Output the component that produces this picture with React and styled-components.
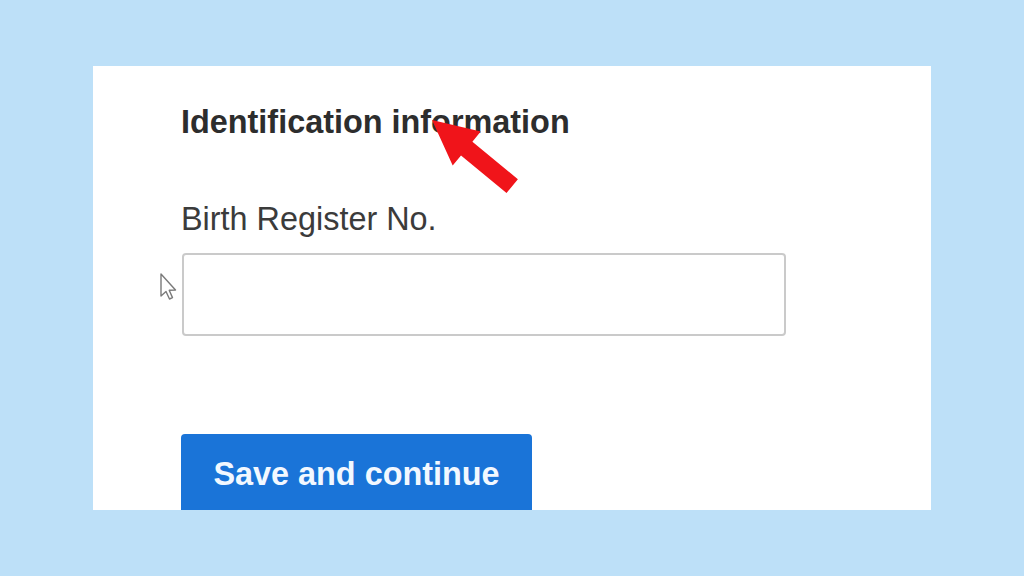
import React from 'react';
import styled, { createGlobalStyle } from 'styled-components';

const GlobalStyle = createGlobalStyle`
  html, body {
    margin: 0;
    padding: 0;
    width: 1024px;
    height: 576px;
    overflow: hidden;
    background: #bde0f8;
    font-family: "Liberation Sans", Arial, sans-serif;
  }
`;

const Page = styled.div`
  width: 1024px;
  height: 576px;
  padding: 66px 0 0 93px;
  box-sizing: border-box;
`;

const Card = styled.section`
  position: relative;
  width: 838px;
  height: 444px;
  background: #ffffff;
  overflow: hidden;
  padding: 38px 0 0 88px;
  box-sizing: border-box;
  display: flex;
  flex-direction: column;
  align-items: flex-start;
  & > * {
    flex-shrink: 0;
  }
`;

const Heading = styled.h2`
  margin: 0;
  font-size: 32.4px;
  line-height: 1.15;
  font-weight: 700;
  color: #2d2d2d;
`;

const Label = styled.label`
  margin-top: 60px;
  font-size: 32.4px;
  line-height: 1.15;
  color: #3b3b3b;
`;

const Input = styled.div`
  margin-top: 14px;
  margin-left: 1px;
  width: 604px;
  height: 83px;
  box-sizing: border-box;
  border: 2px solid #cacaca;
  border-radius: 4px;
  background: #fff;
`;

const Button = styled.button`
  margin-top: 98px;
  width: 351px;
  height: 110px;
  border: none;
  border-radius: 4px 4px 0 0;
  background: #1a74d8;
  color: #f2f8ff;
  font-family: inherit;
  font-size: 32.4px;
  font-weight: 700;
  line-height: 1.15;
  padding: 22px 0 0 0;
  display: flex;
  justify-content: center;
  align-items: flex-start;
`;

const Overlay = styled.svg`
  position: absolute;
  left: ${p => p.$x}px;
  top: ${p => p.$y}px;
  pointer-events: none;
`;

const App = () => {
  return (
    <>
      <GlobalStyle />
      <Page>
        <Card>
          <Heading>Identification information</Heading>
          <Label>Birth Register No.</Label>
          <Input />
          <Button>Save and continue</Button>
          <Overlay $x={327} $y={44} width="110" height="95" viewBox="420 110 110 95">
            <polygon
              points="432,120 480.7,131.6 472.4,141.7 517.9,179.2 506.5,193 461,155.5 452.7,165.6"
              fill="#f0141a"
            />
          </Overlay>
          <Overlay $x={65} $y={206} width="24" height="32" viewBox="0 0 24 32">
            <path
              d="M3 2 L3 24 L8 19.5 L11.5 27 L14.5 25.6 L11.2 18.3 L17.5 18 Z"
              fill="#ffffff"
              stroke="#7a7a7a"
              strokeWidth="1.4"
              strokeLinejoin="round"
            />
          </Overlay>
        </Card>
      </Page>
    </>
  );
};

export default App;
